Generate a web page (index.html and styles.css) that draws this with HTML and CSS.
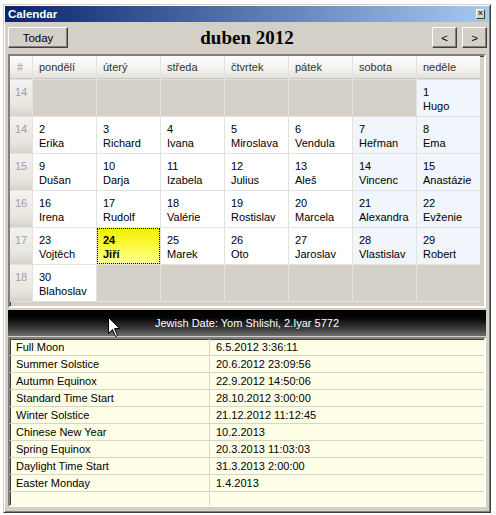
FILE: index.html
```html
<!DOCTYPE html>
<html>
<head>
<meta charset="utf-8">
<link rel="stylesheet" href="styles.css">
</head>
<body>
<div class="window">
  <div class="titlebar">
    <span class="title">Calendar</span>
    <span class="close">×</span>
  </div>
  <div class="toolbar">
    <button class="btn today">Today</button>
    <div class="month">duben 2012</div>
    <div class="navs">
      <button class="btn nav">&lt;</button>
      <button class="btn nav">&gt;</button>
    </div>
  </div>
  <div class="gridframe">
    <div class="cal">
      <div class="hd wkh">#</div>
      <div class="hd">pondělí</div>
      <div class="hd">úterý</div>
      <div class="hd">středa</div>
      <div class="hd">čtvrtek</div>
      <div class="hd">pátek</div>
      <div class="hd">sobota</div>
      <div class="hd">neděle</div>

      <div class="wk">14</div>
      <div class="c off"></div><div class="c off"></div><div class="c off"></div><div class="c off"></div><div class="c off"></div><div class="c off"></div>
      <div class="c we">1<br>Hugo</div>

      <div class="wk">14</div>
      <div class="c">2<br>Erika</div>
      <div class="c">3<br>Richard</div>
      <div class="c">4<br>Ivana</div>
      <div class="c">5<br>Miroslava</div>
      <div class="c">6<br>Vendula</div>
      <div class="c we">7<br>Heřman</div>
      <div class="c we">8<br>Ema</div>

      <div class="wk">15</div>
      <div class="c">9<br>Dušan</div>
      <div class="c">10<br>Darja</div>
      <div class="c">11<br>Izabela</div>
      <div class="c">12<br>Julius</div>
      <div class="c">13<br>Aleš</div>
      <div class="c we">14<br>Vincenc</div>
      <div class="c we">15<br>Anastázie</div>

      <div class="wk">16</div>
      <div class="c">16<br>Irena</div>
      <div class="c">17<br>Rudolf</div>
      <div class="c">18<br>Valérie</div>
      <div class="c">19<br>Rostislav</div>
      <div class="c">20<br>Marcela</div>
      <div class="c we">21<br>Alexandra</div>
      <div class="c we">22<br>Evženie</div>

      <div class="wk">17</div>
      <div class="c">23<br>Vojtěch</div>
      <div class="c sel">24<br>Jiří</div>
      <div class="c">25<br>Marek</div>
      <div class="c">26<br>Oto</div>
      <div class="c">27<br>Jaroslav</div>
      <div class="c we">28<br>Vlastislav</div>
      <div class="c we">29<br>Robert</div>

      <div class="wk">18</div>
      <div class="c">30<br>Blahoslav</div>
      <div class="c off"></div><div class="c off"></div><div class="c off"></div><div class="c off"></div><div class="c off"></div><div class="c off"></div>
    </div>
  </div>
  <div class="jewish">Jewish Date: Yom Shlishi, 2.Iyar 5772</div>
  <div class="listframe">
    <div class="list">
      <div class="r"><span class="n">Full Moon</span><span class="d">6.5.2012 3:36:11</span></div>
      <div class="r"><span class="n">Summer Solstice</span><span class="d">20.6.2012 23:09:56</span></div>
      <div class="r"><span class="n">Autumn Equinox</span><span class="d">22.9.2012 14:50:06</span></div>
      <div class="r"><span class="n">Standard Time Start</span><span class="d">28.10.2012 3:00:00</span></div>
      <div class="r"><span class="n">Winter Solstice</span><span class="d">21.12.2012 11:12:45</span></div>
      <div class="r"><span class="n">Chinese New Year</span><span class="d">10.2.2013</span></div>
      <div class="r"><span class="n">Spring Equinox</span><span class="d">20.3.2013 11:03:03</span></div>
      <div class="r"><span class="n">Daylight Time Start</span><span class="d">31.3.2013 2:00:00</span></div>
      <div class="r"><span class="n">Easter Monday</span><span class="d">1.4.2013</span></div>
      <div class="r last"><span class="n"></span><span class="d"></span></div>
    </div>
  </div>
  <svg class="cursor" width="13" height="21" viewBox="0 0 13 21">
    <path d="M0.5 0.5 L0.5 16.5 L4.5 12.5 L7.5 19.5 L9.5 18.5 L6.5 11.5 L11.5 11.5 Z" fill="#fff" stroke="#000" stroke-width="1"/>
  </svg>
</div>
</body>
</html>
```
FILE: styles.css
```css
* { box-sizing: border-box; }
html, body { margin: 0; padding: 0; background: #ffffff; }
body {
  font-family: "Liberation Sans", Arial, sans-serif;
  font-size: 11px;
  color: #000;
}
.window {
  position: relative;
  margin: 4px 0 0 3px;
  width: 488px;
  height: 509px;
  background: #d4d0c8;
  border: 1px solid;
  border-color: #d4d0c8 #404040 #404040 #d4d0c8;
  box-shadow: inset 1px 1px 0 #ffffff, inset -1px -1px 0 #808080;
  padding: 1px;
}
.titlebar {
  height: 16px;
  background: linear-gradient(to right, #0a246a, #a6caf0);
  display: flex;
  align-items: center;
  justify-content: space-between;
  padding: 0 3px 0 3px;
}
.title {
  color: #fff;
  font-weight: bold;
  font-size: 11.5px;
}
.close {
  width: 9px;
  height: 10px;
  background: #d4d0c8;
  border: 1px solid;
  border-color: #fff #404040 #404040 #fff;
  font-size: 9px;
  line-height: 7px;
  text-align: center;
  color: #000;
  margin-right: 1px;
}
.toolbar {
  height: 32px;
  display: flex;
  align-items: flex-start;
  justify-content: space-between;
  padding: 5px 2px 0 3px;
  position: relative;
}
.btn {
  font-family: "Liberation Sans", Arial, sans-serif;
  font-size: 11.5px;
  background: #d4d0c8;
  color: #000;
  border: 1px solid;
  border-color: #ffffff #404040 #404040 #ffffff;
  box-shadow: inset -1px -1px 0 #808080;
  padding: 0;
  height: 21px;
  margin: 0;
}
.today { width: 60px; }
.nav { width: 25px; }
.navs { display: flex; gap: 5px; }
.month {
  font-family: "Liberation Serif", "Times New Roman", serif;
  font-weight: bold;
  font-size: 19px;
  line-height: 21px;
  position: absolute;
  left: 0;
  right: 0;
  top: 5px;
  text-align: center;
  pointer-events: none;
}
.gridframe {
  margin: 0 3px 0 3px;
  height: 254px;
  border: 2px solid;
  border-color: #808080 #ffffff #ffffff #808080;
  box-shadow: inset 1px 1px 0 #404040;
  background: #d4d0c8;
}
.cal {
  display: grid;
  grid-template-columns: 22px repeat(7, 63px);
  grid-template-rows: 23px repeat(6, 36px);
  gap: 1px;
  background: #e4e2dc;
  width: 470px;
  border-bottom: 1px solid #e4e2dc;
}
.hd {
  background: linear-gradient(#fdfdfb, #f2f1ec 60%, #e3e1da);
  color: #333;
  padding: 0 0 0 6px;
  line-height: 22px;
  border-bottom: 1px solid #c9c6bd;
}
.wkh { color: #999; padding-left: 7px; }
.wk {
  background: linear-gradient(#f3f2ee, #e8e6e0 70%, #d6d3cb);
  color: #a0a0a0;
  text-align: center;
  padding-top: 5px;
  line-height: 14px;
}
.c {
  background: #ffffff;
  padding: 5px 0 0 6px;
  line-height: 14px;
  white-space: nowrap;
  overflow: hidden;
}
.c.we { background: #f0f6fc; }
.c.off { background: #d4d0c8; }
.c.sel {
  background: linear-gradient(#f0f000, #fafa40 50%, #ffff9a);
  font-weight: bold;
  outline: 1px dotted #000;
  outline-offset: -1px;
}
.jewish {
  margin: 2px 3px 0 3px;
  height: 26px;
  background: linear-gradient(#000000 0%, #050505 30%, #404040 75%, #707070 100%);
  color: #ffffff;
  text-align: center;
  line-height: 26px;
  font-size: 11px;
}
.listframe {
  margin: 1px 3px 0 3px;
  height: 170px;
  border: 2px solid;
  border-color: #808080 #ffffff #ffffff #808080;
  box-shadow: inset 1px 1px 0 #404040;
  background: #ffffe7;
}
.list { display: flex; flex-direction: column; height: 100%; }
.r {
  display: flex;
  height: 17px;
  border-bottom: 1px solid #d6d6c8;
  line-height: 16px;
  white-space: nowrap;
}
.r.last { flex: 1; border-bottom: none; }
.n {
  width: 200px;
  padding-left: 6px;
  border-right: 1px solid #d6d6c8;
}
.d { padding-left: 6px; }
.cursor {
  position: absolute;
  left: 104px;
  top: 312px;
}
```
